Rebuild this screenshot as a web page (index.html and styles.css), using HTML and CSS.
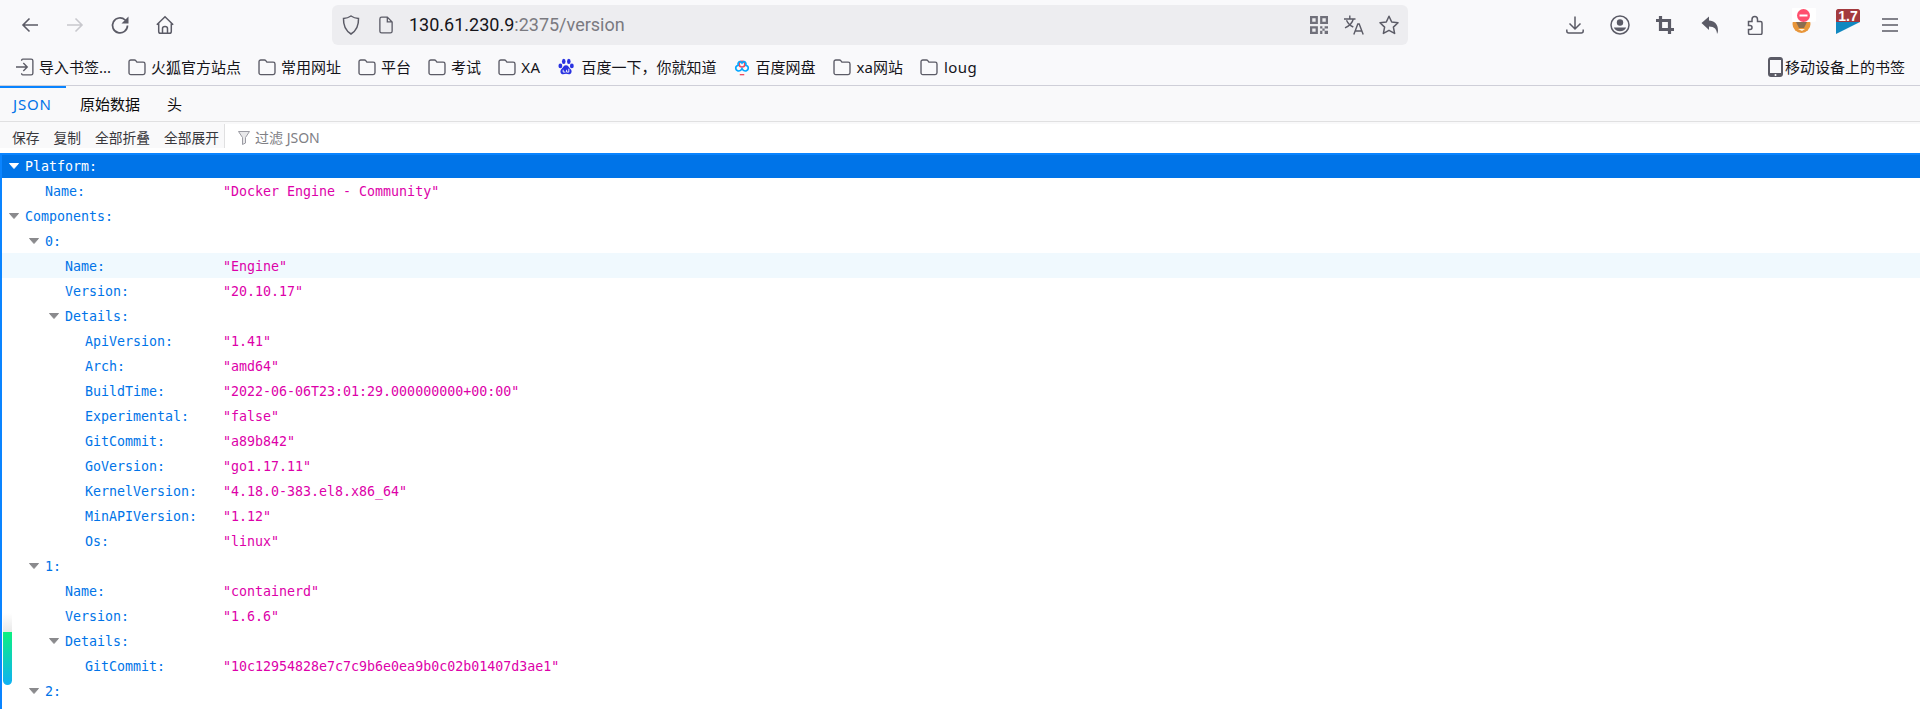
FILE: index.html
```html
<!DOCTYPE html>
<html lang="zh-CN">
<head>
<meta charset="utf-8">
<title>130.61.230.9:2375/version</title>
<link rel="stylesheet" href="styles.css">
</head>
<body>
<svg class="defs" width="0" height="0">
  <symbol id="folder" viewBox="0 0 16 16"><path d="M2.500 1.800h3.200c.5 0 .9.2 1.200.6l1 1.300h5.600c.9 0 1.600.7 1.600 1.600v7.900c0 .9-.7 1.600-1.600 1.600H2.500c-.9 0-1.600-.7-1.600-1.600V3.400c0-.9.700-1.600 1.600-1.600z" fill="none" stroke="#5b5b66" stroke-width="1.200"/></symbol>
  <symbol id="tw" viewBox="0 0 10 6"><path d="M.5.500h9L5 5.500z" fill="currentColor" stroke="currentColor" stroke-linejoin="round"/></symbol>
</svg>
<header class="chrome">
  <div class="navbar">
    <div class="nav-left">
      <svg class="ic" viewBox="0 0 20 20"><path d="M18 10H3M9.500 3.500 3 10l6.500 6.500" fill="none" stroke="#5b5b66" stroke-width="1.600"/></svg>
      <svg class="ic" viewBox="0 0 20 20"><path d="M2 10h15M10.500 3.500 17 10l-6.500 6.500" fill="none" stroke="#c8c8cd" stroke-width="1.600"/></svg>
      <svg class="ic" viewBox="0 0 20 20"><path d="M17.500 10.500a7.500 7.500 0 1 1-2.300-5.500L17 6.800" fill="none" stroke="#5b5b66" stroke-width="1.700"/><path d="M18.500 1.500v7h-7z" fill="#5b5b66"/></svg>
      <svg class="ic" viewBox="0 0 20 20"><path d="M1.800 9.800 10 1.800l8.200 8M3.700 8.500v8c0 1 .8 1.800 1.800 1.800h9c1 0 1.800-.8 1.800-1.800v-8M7.500 18.300v-4.800c0-1.100 1-2 2.500-2s2.500.9 2.500 2v4.800" fill="none" stroke="#5b5b66" stroke-width="1.500"/></svg>
    </div>
    <div class="urlbar">
      <svg class="ic-m shield" viewBox="0 0 20 20"><path d="M10 1c2.200 1.500 4.700 2.300 7.500 2.400.3 7.300-2.200 12.400-7.500 15.600C4.700 15.800 2.200 10.700 2.500 3.400 5.300 3.300 7.800 2.500 10 1z" fill="none" stroke="#5b5b66" stroke-width="1.500"/></svg>
      <svg class="ic-s page" viewBox="0 0 16 20"><path d="M3 1h6.500L15 6.500V17c0 1.100-.9 2-2 2H3c-1.100 0-2-.9-2-2V3c0-1.100.9-2 2-2zM9.500 1v5.500H15" fill="none" stroke="#5b5b66" stroke-width="1.500"/></svg>
      <div class="url"><span class="host">130.61.230.9</span>:2375/version</div>
      <div class="url-actions">
        <svg class="ic-s qr" viewBox="0 0 16 16"><g fill="#5b5b66"><path d="M0 0h7v7H0zM2 2v3h3V2zM9 0h7v7H9zM11 2v3h3V2zM0 9h7v7H0zM2 11v3h3v-3z" fill-rule="evenodd"/><path d="M9 9h2v2H9zM13 9h3v2h-3zM11 11h2v2h-2zM9 13h2v3H9zM13 13h3v3h-3z"/></g></svg>
        <svg class="ic-m" viewBox="0 0 20 20"><path d="M0 4h11.500M5.800 .5V4M9.300 4c-.9 3.800-3.700 6.800-8.300 8.800M2.500 5.200c1.300 3 3.600 5.400 6.800 6.800" fill="none" stroke="#5b5b66" stroke-width="1.400"/><path d="M9.800 19.500 13.800 9h1.400l4 10.500M11.300 16h6.400" fill="none" stroke="#5b5b66" stroke-width="1.400"/></svg>
        <svg class="ic-m" viewBox="0 0 20 20"><path d="m10 1.200 2.700 5.800 6.300.8-4.600 4.300 1.200 6.300-5.600-3.100-5.600 3.100 1.200-6.300L1 7.800 7.300 7z" fill="none" stroke="#5b5b66" stroke-width="1.500" stroke-linejoin="round"/></svg>
      </div>
    </div>
    <div class="nav-right">
      <svg class="ic" viewBox="0 0 20 20"><path d="M10 1.500v12M4.500 8.500l5.500 5.500 5.500-5.500M1.800 14.500V16c0 1.200.8 2 2 2h12.400c1.200 0 2-.8 2-2v-1.500" fill="none" stroke="#5b5b66" stroke-width="1.500"/></svg>
      <svg class="ic" viewBox="0 0 20 20"><circle cx="10" cy="10" r="9" fill="none" stroke="#5b5b66" stroke-width="1.500"/><circle cx="10" cy="7.500" r="3.200" fill="#5b5b66"/><path d="M3.800 12.500h12.400c-.8 2.300-3.300 3.800-6.200 3.800s-5.400-1.500-6.200-3.800z" fill="#5b5b66"/></svg>
      <svg class="ic" viewBox="0 0 20 20"><path d="M5.500 1v13.500H19M1 5.500h13.500V19" fill="none" stroke="#5b5b66" stroke-width="3.200"/></svg>
      <svg class="ic" viewBox="0 0 20 20"><path d="M1.500 8 9 1.500V5.500c5 .5 9 3 9 10 0 1.500-.5 2.800-1 3.500 0-4.500-2.500-7.500-8-7.500v3.500z" fill="#5b5b66"/></svg>
      <svg class="ic" viewBox="0 0 20 20"><path d="M3.500 6.500H7V4.500C7 2.800 8.200 1.500 9.800 1.500s2.700 1.300 2.700 3v2h3c.8 0 1.500.7 1.500 1.500v10c0 .8-.7 1.500-1.500 1.500H5c-.8 0-1.500-.7-1.500-1.500v-3.500H5c1.200 0 2-.8 2-2s-.8-2-2-2H3.500z" fill="none" stroke="#5b5b66" stroke-width="1.500"/></svg>
      <svg class="ext" viewBox="0 0 24 26"><circle cx="9.500" cy="16" r="9" fill="#e8963a"/><path d="M4 14h11l-3 6H7z" fill="#8a6d50"/><path d="M6 21h7l-3 2z" fill="#fff2dc"/><path d="M1 0h22c.6 0 1 .4 1 1v11c0 1-1 2-2 2H0V1c0-.6.4-1 1-1z" fill="#fff"/><circle cx="11.500" cy="7.500" r="6.500" fill="#ff4f6d"/><path d="M7.500 6.500h8v2h-8z" fill="#fff"/></svg>
      <div class="badge-ext">
        <svg class="badge-flag" viewBox="0 0 24 25"><path d="M0 13h24L0 25z" fill="#1188c0"/><path d="M2 0h20c1 0 2 1 2 2v11H0V2c0-1 1-2 2-2z" fill="#a33a3e"/></svg>
        <span class="badge-num">1.7</span>
      </div>
      <svg class="ic menu" viewBox="0 0 20 20"><path d="M2 4h16M2 10h16M2 16h16" fill="none" stroke="#5b5b66" stroke-width="1.500"/></svg>
    </div>
  </div>
  <nav class="bookmarks">
    <div class="bm"><svg class="bi" viewBox="0 0 16 16"><path d="M0 8h9.500M6.500 4.500 10 8l-3.500 3.500M5 2.500V2c0-.6.400-1 1-1h7.500c.8 0 1.500.7 1.500 1.500v11c0 .8-.7 1.500-1.500 1.500H6c-.6 0-1-.4-1-1v-.5" fill="none" stroke="#5b5b66" stroke-width="1.200"/></svg>导入书签...</div>
    <div class="bm"><svg class="bi"><use href="#folder"/></svg>火狐官方站点</div>
    <div class="bm"><svg class="bi"><use href="#folder"/></svg>常用网址</div>
    <div class="bm"><svg class="bi"><use href="#folder"/></svg>平台</div>
    <div class="bm"><svg class="bi"><use href="#folder"/></svg>考试</div>
    <div class="bm bm-latin"><svg class="bi"><use href="#folder"/></svg>XA</div>
    <div class="bm bm-baidu"><svg class="bi" viewBox="0 0 16 16"><g fill="#2932e1"><ellipse cx="3" cy="7" rx="1.700" ry="2.200"/><ellipse cx="6" cy="3" rx="1.600" ry="2.300"/><ellipse cx="10.500" cy="3" rx="1.600" ry="2.300"/><ellipse cx="13.200" cy="7" rx="1.700" ry="2.200"/><path d="M8 6.500c2 0 2.500 2 4 3.200 1.800 1.500 1 4.800-1.500 4.800-1 0-1.700-.4-2.500-.4s-1.500.4-2.500.4C3 14.500 2.300 11.200 4 9.700c1.500-1.200 2-3.200 4-3.200z"/></g><path d="M5.500 10.500v2h2M10.500 9.500v3h-2v-2" fill="none" stroke="#fff" stroke-width=".8"/></svg>百度一下，你就知道</div>
    <div class="bm"><svg class="bi" viewBox="0 0 16 16"><circle cx="8" cy="5.500" r="2.500" fill="none" stroke="#ef4b5f" stroke-width="1.400"/><path d="M8 4.500C6 1.500 4 4 4.500 6.500 2 7 1.500 10.500 4.500 11.500c2 .4 3-1 3.500-2 .5 1 1.500 2.400 3.500 2 3-1 2.500-4.500 0-5C12 4 10 1.500 8 4.500z" fill="none" stroke="#06a7ff" stroke-width="1.500"/><path d="M6 14.800h4" stroke="#ef4b5f" stroke-width="1.200"/></svg>百度网盘</div>
    <div class="bm bm-wide"><svg class="bi"><use href="#folder"/></svg>xa网站</div>
    <div class="bm bm-wide bm-latin"><svg class="bi"><use href="#folder"/></svg>loug</div>
    <div class="bm bm-mobile"><svg class="phone" viewBox="0 0 15 20"><path d="M3 0h9c1.700 0 3 1.300 3 3v14c0 1.700-1.300 3-3 3H3c-1.700 0-3-1.300-3-3V3c0-1.700 1.300-3 3-3zM2 3v13h11V3z" fill="#5b5b66" fill-rule="evenodd"/><circle cx="7.500" cy="18" r="1" fill="#fff"/></svg>移动设备上的书签</div>
  </nav>
</header>
<div class="tabs">
  <div class="tab active">JSON</div>
  <div class="tab">原始数据</div>
  <div class="tab">头</div>
</div>
<div class="tools">
  <div class="tool-btns"><span>保存</span><span>复制</span><span>全部折叠</span><span>全部展开</span></div>
  <div class="filter"><svg class="funnel" viewBox="0 0 12 14"><path d="M.5.500h11L7.500 6.500V12l-3 1.500v-7z" fill="#e8e8ea" stroke="#9b9ba3"/></svg>过滤 JSON</div>
</div>
<main class="tree">
  <div class="row sel d0"><svg class="tw"><use href="#tw"/></svg><span class="k">Platform:</span></div>
  <div class="row d1"><span class="k">Name:</span><span class="v">"Docker Engine - Community"</span></div>
  <div class="row d0"><svg class="tw"><use href="#tw"/></svg><span class="k">Components:</span></div>
  <div class="row d1"><svg class="tw"><use href="#tw"/></svg><span class="k">0:</span></div>
  <div class="row d2 hov"><span class="k">Name:</span><span class="v">"Engine"</span></div>
  <div class="row d2"><span class="k">Version:</span><span class="v">"20.10.17"</span></div>
  <div class="row d2"><svg class="tw"><use href="#tw"/></svg><span class="k">Details:</span></div>
  <div class="row d3"><span class="k">ApiVersion:</span><span class="v">"1.41"</span></div>
  <div class="row d3"><span class="k">Arch:</span><span class="v">"amd64"</span></div>
  <div class="row d3"><span class="k">BuildTime:</span><span class="v">"2022-06-06T23:01:29.000000000+00:00"</span></div>
  <div class="row d3"><span class="k">Experimental:</span><span class="v">"false"</span></div>
  <div class="row d3"><span class="k">GitCommit:</span><span class="v">"a89b842"</span></div>
  <div class="row d3"><span class="k">GoVersion:</span><span class="v">"go1.17.11"</span></div>
  <div class="row d3"><span class="k">KernelVersion:</span><span class="v">"4.18.0-383.el8.x86_64"</span></div>
  <div class="row d3"><span class="k">MinAPIVersion:</span><span class="v">"1.12"</span></div>
  <div class="row d3"><span class="k">Os:</span><span class="v">"linux"</span></div>
  <div class="row d1"><svg class="tw"><use href="#tw"/></svg><span class="k">1:</span></div>
  <div class="row d2"><span class="k">Name:</span><span class="v">"containerd"</span></div>
  <div class="row d2"><span class="k">Version:</span><span class="v">"1.6.6"</span></div>
  <div class="row d2"><svg class="tw"><use href="#tw"/></svg><span class="k">Details:</span></div>
  <div class="row d3"><span class="k">GitCommit:</span><span class="v">"10c12954828e7c7c9b6e0ea9b0c02b01407d3ae1"</span></div>
  <div class="row d1"><svg class="tw"><use href="#tw"/></svg><span class="k">2:</span></div>
  <div class="scroll-mark"></div>
</main>
</body>
</html>
```
FILE: styles.css
```css
* { box-sizing: border-box; }
html, body { margin: 0; height: 100%; overflow: hidden; background: #fff; }
body { font-family: "Noto Sans", "Noto Sans CJK SC", "Liberation Sans", sans-serif; color: #15141a; }
.defs { position: absolute; }

.chrome { height: 86px; background: #f9f9fb; border-bottom: 1px solid #cfcfd8; }
.navbar { height: 50px; display: flex; align-items: center; }
.nav-left { display: flex; align-items: center; gap: 25px; width: 332px; padding-left: 20px; }
.ic { width: 20px; height: 20px; flex: none; }
.urlbar { width: 1076px; height: 40px; background: #ededf0; border-radius: 6px; display: flex; align-items: center; padding-left: 9px; }
.ic-s { width: 16px; height: 16px; flex: none; }
.ic-m { width: 20px; height: 20px; flex: none; }
.qr { width: 18px; height: 18px; margin-right: 1px; opacity: .85; }
.page { width: 14px; height: 18px; margin-left: 18px; }
.url { font: 18px/24px "Roboto", "Liberation Sans", sans-serif; color: #7a7a80; margin-left: 16px; flex: 1; white-space: nowrap; }
.host { color: #15141a; }
.url-actions { display: flex; align-items: center; gap: 15px; padding-right: 9px; }
.nav-right { flex: 1; display: flex; align-items: center; justify-content: flex-end; gap: 25px; padding-right: 20px; }
.ext { width: 24px; height: 26px; flex: none; margin: -9px -3px 0 2px; }
.badge-ext { position: relative; width: 24px; height: 25px; flex: none; margin-top: -8px; margin-left: -2px; }
.badge-flag { display: block; width: 24px; height: 25px; }
.badge-num { position: absolute; left: 0; right: 0; top: 0; font: bold 14px/14px "Liberation Sans", sans-serif; color: #fff; text-align: center; }
.menu { margin-left: -5px; }

.bookmarks { height: 35px; display: flex; align-items: center; padding-left: 16px; padding-bottom: 1px; font-size: 15px; line-height: 20px; white-space: nowrap; }
.bm { display: flex; align-items: center; margin-right: 17px; }
.bi { width: 18px; height: 18px; flex: none; margin-right: 5px; }
.bm-latin { letter-spacing: .5px; margin-right: 16px; }
.bm-baidu { margin-right: 16px; }
.bm-baidu .bi { margin-right: 7px; }
.bm-wide .bi { margin-right: 6px; }
.bm-mobile { margin-left: auto; margin-right: 15px; }
.phone { width: 15px; height: 20px; margin-right: 2px; flex: none; }

.tabs { height: 36px; display: flex; background: #f9f9fa; border-bottom: 1px solid #e0e0e1; font-size: 15px; line-height: 20px; }
.tab { display: flex; align-items: center; padding: 0 13px 2px 14px; border-top: 2px solid transparent; color: #0c0c0d; }
.tab.active { color: #0074e8; border-top-color: #0a84ff; width: 66px; padding-left: 13px; padding-right: 0; letter-spacing: .8px; }

.tools { height: 26px; display: flex; background: #f9f9fa; font-size: 13.75px; line-height: 20px; color: #38383d; white-space: nowrap; }
.tool-btns { width: 224px; display: flex; gap: 14px; padding: 5px 0 0 12px; align-items: center; }
.filter { flex: 1; margin-top: 2px; background: #fff; border-left: 1px solid #e0e0e1; display: flex; align-items: center; padding: 3px 0 0 13px; font-size: 14px; color: #808085; }
.funnel { width: 12px; height: 14px; margin-right: 5px; }

.tree { position: relative; margin-top: 5px; height: 556px; border-left: 2px solid #0a84ff; font: 13.3px/25px "DejaVu Sans Mono", "Liberation Mono", monospace; overflow: hidden; }
.row { height: 25px; display: flex; align-items: center; padding-top: 2px; color: #0074e8; position: relative; white-space: nowrap; }
.tw { width: 10px; height: 6px; color: #8a8a8d; flex: none; margin: -2px 6px 0 0; }
.k { flex: none; }
.v { position: absolute; left: 221px; color: #dd00a9; }
.d0 { padding-left: 7px; }
.d1 { padding-left: 27px; }
.d2 { padding-left: 47px; }
.d3 { padding-left: 83px; }
.d1 > .k:first-child { margin-left: 16px; }
.d2 > .k:first-child { margin-left: 16px; }
.sel { background: #0074e8; color: #fff; box-shadow: inset 0 2px #0a84ff; }
.sel .tw { color: #fff; }
.hov { background: #f0f9fe; }
.scroll-mark { position: absolute; left: 1px; top: 479px; width: 9px; height: 53px; border-radius: 0 0 5px 5px; background: linear-gradient(#0cf080, #10b0f4); }
.scroll-mark::before { content: ""; position: absolute; left: 0; right: 0; top: -19px; height: 19px; background: linear-gradient(#ffffff, #e8e8e8); }
```
